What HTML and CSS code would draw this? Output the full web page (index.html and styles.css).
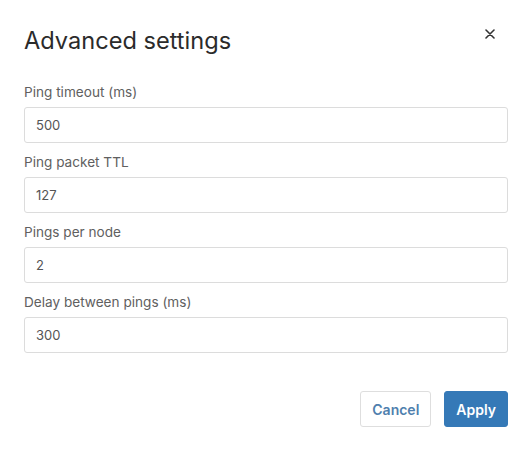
FILE: index.html
```html
<!DOCTYPE html>
<html>
<head>
<meta charset="utf-8">
<link rel="stylesheet" href="styles.css">
</head>
<body>
<div class="dialog">
  <div class="header">
    <h1 class="title">Advanced settings</h1>
    <button class="close" aria-label="Close">
      <svg width="10" height="10" viewBox="0 0 10 10"><path d="M1 1L9 9M9 1L1 9" stroke="#333" stroke-width="1.6" stroke-linecap="round"/></svg>
    </button>
  </div>
  <form class="form">
    <div class="group">
      <label class="label">Ping timeout (ms)</label>
      <input class="input" type="text" value="500">
    </div>
    <div class="group">
      <label class="label">Ping packet TTL</label>
      <input class="input" type="text" value="127">
    </div>
    <div class="group">
      <label class="label">Pings per node</label>
      <input class="input" type="text" value="2">
    </div>
    <div class="group">
      <label class="label">Delay between pings (ms)</label>
      <input class="input" type="text" value="300">
    </div>
  </form>
  <div class="footer">
    <button class="btn btn-default">Cancel</button>
    <button class="btn btn-primary">Apply</button>
  </div>
</div>
</body>
</html>
```
FILE: styles.css
```css
html, body {
  margin: 0;
  padding: 0;
  background: #fff;
}
body {
  font-family: Inter, "Noto Sans", sans-serif;
  color: #333;
}
.dialog {
  width: 531px;
  height: 450px;
  box-sizing: border-box;
  padding: 25px 23px 0 24px;
}
.header {
  display: flex;
  justify-content: space-between;
  align-items: flex-start;
  height: 32px;
}
.title {
  margin: 0;
  font-size: 23.6px;
  line-height: 32px;
  font-weight: 400;
  color: #2b2b2b;
}
.close {
  border: 0;
  background: none;
  padding: 0;
  margin: 4px 13px 0 0;
  width: 10px;
  height: 10px;
  display: flex;
}
.form {
  margin-top: 25px;
  display: flex;
  flex-direction: column;
}
.group {
  display: flex;
  flex-direction: column;
  margin-bottom: 9px;
}
.label {
  font-size: 13.6px;
  line-height: 20px;
  color: #606060;
  margin-bottom: 5px;
}
.input {
  height: 36px;
  box-sizing: border-box;
  border: 1px solid #dcdcdc;
  border-radius: 3px;
  padding: 0 11px;
  font-family: Inter, "Noto Sans", sans-serif;
  font-size: 13px;
  color: #555;
  background: #fff;
  outline: none;
}
.footer {
  margin-top: 29px;
  display: flex;
  justify-content: flex-end;
  gap: 13px;
}
.btn {
  height: 36px;
  box-sizing: border-box;
  border-radius: 3px;
  padding: 0 11px;
  font-family: Inter, "Noto Sans", sans-serif;
  font-size: 14px;
  font-weight: 600;
  cursor: pointer;
}
.btn-default {
  background: #fff;
  border: 1px solid #dedede;
  color: #4f7fae;
}
.btn-primary {
  background: #3579b7;
  border: 1px solid #3579b7;
  color: #fff;
}
```
